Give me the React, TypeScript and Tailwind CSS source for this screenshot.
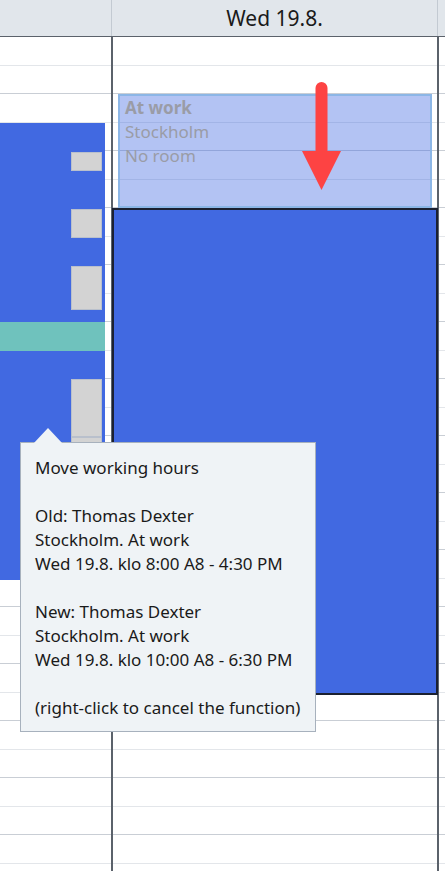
import React from "react";

const ROWS = Array.from({length: 30}, (_, i) => i);

// half-hour rows, the full-hour line is a bit darker
function Rows() {
  return (
    <>
      {ROWS.map((i) => (
        <div
          key={i}
          className={
            i % 2 === 1
              ? "h-[28.5px] shrink-0 border-b border-[#c9ced5]"
              : "h-[28.5px] shrink-0 border-b border-[#e3e6ea]"
          }
        />
      ))}
    </>
  );
}

const slots = [
  {top: 115, height: 19},
  {top: 172, height: 29},
  {top: 229, height: 44},
  {top: 342, height: 58},
  {top: 400, height: 40},
];

const tipLines = [
  "Move working hours",
  "",
  "Old: Thomas Dexter",
  "Stockholm. At work",
  "Wed 19.8. klo 8:00 A8 - 4:30 PM",
  "",
  "New: Thomas Dexter",
  "Stockholm. At work",
  "Wed 19.8. klo 10:00 A8 - 6:30 PM",
  "",
  "(right-click to cancel the function)",
];

export default function App() {
  return (
    <div className="h-[871px] w-[445px] overflow-hidden bg-white font-['Segoe_UI','Noto_Sans',sans-serif] text-[#1a1a1a]">
      <div className="flex h-[37px] border-b border-[#5b626b] bg-[#e1e6eb]">
        <div className="w-[112px] shrink-0 border-r border-[#c3cad2]" />
        <div className="flex w-[326px] shrink-0 items-center justify-center border-r border-[#c3cad2] pt-[1px] text-[21px]">
          Wed 19.8.
        </div>
        <div className="flex-1" />
      </div>

      <div className="relative flex h-[834px]">
        <div className="flex w-[113px] shrink-0 flex-col border-r-2 border-[#5b626b]">
          <Rows />
        </div>
        <div className="flex w-[326px] shrink-0 flex-col border-r-2 border-[#5b626b]">
          <Rows />
        </div>
        <div className="flex flex-1 flex-col">
          <Rows />
        </div>

        {/* existing shift in the previous column */}
        <div className="absolute left-0 top-[86px] h-[457px] w-[105px] bg-[#4169e1]">
          {slots.map((s, i) => (
            <div
              key={i}
              className="absolute left-[71px] w-[31px] border border-[#b9c0cc] bg-[#d3d3d3]"
              style={{top: s.top - 86, height: s.height}}
            />
          ))}
          <div className="absolute left-0 top-[199px] h-[29px] w-[105px] bg-[#6fc2bd]" />
        </div>

        {/* original position, shown faded */}
        <div className="absolute left-[118px] top-[57px] h-[114px] w-[314px] border-2 border-[#8cb6e6] bg-[#4169e1]/40 pl-[5px] text-[17px] leading-[24px] text-[#9a9ca6]">
          <div className="font-bold">At work</div>
          <div>Stockholm</div>
          <div>No room</div>
        </div>

        {/* new position */}
        <div className="absolute left-[112px] top-[171px] h-[487px] w-[326px] border-2 border-[#1b2030] bg-[#4169e1]" />

        <svg className="absolute left-[302px] top-[45px]" width="39" height="108" viewBox="0 0 39 108">
          <rect x="13.5" y="0" width="12" height="74" rx="6" fill="#fd4343" />
          <polygon points="0,69 39,69 19.5,108" fill="#fd4343" />
        </svg>

        <div className="absolute left-[20px] top-[405px] z-10 h-[290px] w-[296px] border border-[#a7b1bd] bg-[#eff3f6] pl-[14px] pt-[13px] text-[17px] leading-[24px]">
          <svg className="absolute left-[12px] top-[-16px]" width="30" height="17" viewBox="0 0 30 17">
            <polygon points="0,17 15,1 30,17" fill="#eff3f6" />
          </svg>
          {tipLines.map((t, i) => (
            <div key={i} className="h-[24px] whitespace-nowrap">
              {t}
            </div>
          ))}
        </div>
      </div>
    </div>
  );
}
